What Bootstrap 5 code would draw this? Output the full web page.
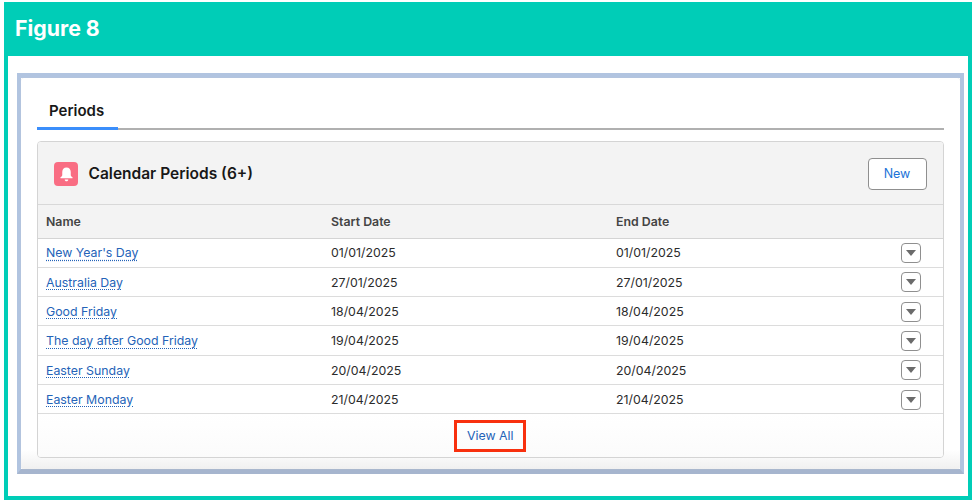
<!DOCTYPE html>
<html lang="en">
<head>
<meta charset="utf-8">
<title>Figure 8</title>
<link href="https://cdn.jsdelivr.net/npm/bootstrap@5.3.0/dist/css/bootstrap.min.css" rel="stylesheet">
<style>
html,body{background:#fff;margin:0;height:504px;overflow:hidden}
body{font-family:Inter,"Liberation Sans",sans-serif;color:#181818;padding:2px 4px 0}
.fig-frame{width:968px;height:498px;border:4px solid #00cdb7;border-top:0;display:flex;flex-direction:column}
.fig-head{height:54px;background:#00cdb7;margin:0 -4px;padding-left:11px;color:#fff;font:700 21.300px/52px Inter,sans-serif;flex:none}
.fig-body{flex:1;padding:17px 4px 0 9px}
.shot{height:401px;border:solid #b1c4e0;border-width:5px 4px 5px 4.500px;border-bottom-color:#a6b5ce;background:#fff}
.shot-in{height:100%;background:linear-gradient(#fff 95%,#f0f0f0);border-radius:4px;padding:0 16.500px 0 16px;box-shadow:0 0 1px #ccc}
.tab-bar{height:52px;border-bottom:2px solid #b0b0b0;display:flex;align-items:flex-end;margin-bottom:11px}
.tab-it{width:81px;height:34px;margin-bottom:-2px;border-bottom:3px solid #3b8efb;padding-left:12px;padding-top:4px;font-weight:600;font-size:15px;line-height:22px;color:#181818}
.panel{height:317px;border:1px solid #d4d4d4;border-radius:4px;overflow:hidden;background:#fff}
.panel-top{height:63px;background:#f3f3f3;border-bottom:1px solid #d8d8d8;padding:2px 15px 0 16px}
.bell{width:24px;height:24px;border-radius:4px;background:#f96d83;margin-right:10.500px}
.panel-title{font-size:15.500px;font-weight:600;color:#181818;margin:0}
.new-btn{width:59px;height:32px;padding:0;font-size:12.500px;color:#1b73d8;background:#fff;border:1px solid #8f8f8f;border-radius:4px;margin-right:1px}
.per-tb{margin:0;font-size:12.350px;table-layout:fixed;width:100%;color:#2b2b2b}
.per-tb th{height:33px;background:#f3f3f3;font-weight:600;color:#444;padding:2px 8px 0;border-bottom:1px solid #d4d4d4;vertical-align:middle;--bs-table-bg:#f3f3f3}
.per-tb td{height:29.330px;padding:2px 8px 0;border-bottom:1px solid #dcdcdc;vertical-align:middle}
.per-tb a{color:#2463b8;text-decoration:underline dotted #2463b8;text-underline-offset:2px}
.col-n{width:285px}.col-s{width:285px}.col-a{width:50px}
.per-tb .cell-a{padding:1px 22px 0 0;text-align:right}
.mini{display:inline-flex;width:20px;height:20px;border:1px solid #8f8f8f;border-radius:4px;background:#fff;padding:0;align-items:center;justify-content:center;vertical-align:middle}
.panel-foot{height:43px;display:flex;align-items:center;justify-content:center;background:linear-gradient(#fff,#fbfbfb)}
.view-all{display:block;width:72px;height:32px;border:3px solid #f8300e;text-align:center;line-height:26px;font-size:12.350px;color:#2463b8;text-decoration:none}
</style>
</head>
<body>
<div class="fig-frame">
  <div class="fig-head">Figure 8</div>
  <div class="fig-body">
    <div class="shot">
      <div class="shot-in">
        <div class="tab-bar"><div class="tab-it">Periods</div></div>
        <div class="panel">
          <div class="panel-top d-flex align-items-center">
            <span class="bell d-flex align-items-center justify-content-center">
              <svg width="17" height="17" viewBox="0 0 16 16" fill="#fff"><path d="M8 1.500c-2.500 0-4 1.900-4 4.200v2.700c0 .9-.7 1.500-1.500 2.100-.5.4-.3 1.100.4 1.100h10.200c.7 0 .9-.7.4-1.100-.8-.6-1.500-1.200-1.500-2.100V5.700c0-2.300-1.500-4.200-4-4.200z"/><path d="M6.300 12.700h3.400c0 1-.8 1.700-1.700 1.700s-1.700-.7-1.700-1.700z"/></svg>
            </span>
            <h2 class="panel-title flex-grow-1">Calendar Periods (6+)</h2>
            <button type="button" class="btn new-btn">New</button>
          </div>
          <table class="table per-tb">
            <colgroup><col class="col-n"><col class="col-s"><col><col class="col-a"></colgroup>
            <thead><tr><th>Name</th><th>Start Date</th><th>End Date</th><th></th></tr></thead>
            <tbody>
              <tr><td><a href="#">New Year's Day</a></td><td>01/01/2025</td><td>01/01/2025</td><td class="cell-a"><button type="button" class="mini" aria-label="Actions"><svg width="10" height="6" viewBox="0 0 10 6"><path d="M0 0h10L5 6z" fill="#6b6b6b"/></svg></button></td></tr>
              <tr><td><a href="#">Australia Day</a></td><td>27/01/2025</td><td>27/01/2025</td><td class="cell-a"><button type="button" class="mini" aria-label="Actions"><svg width="10" height="6" viewBox="0 0 10 6"><path d="M0 0h10L5 6z" fill="#6b6b6b"/></svg></button></td></tr>
              <tr><td><a href="#">Good Friday</a></td><td>18/04/2025</td><td>18/04/2025</td><td class="cell-a"><button type="button" class="mini" aria-label="Actions"><svg width="10" height="6" viewBox="0 0 10 6"><path d="M0 0h10L5 6z" fill="#6b6b6b"/></svg></button></td></tr>
              <tr><td><a href="#">The day after Good Friday</a></td><td>19/04/2025</td><td>19/04/2025</td><td class="cell-a"><button type="button" class="mini" aria-label="Actions"><svg width="10" height="6" viewBox="0 0 10 6"><path d="M0 0h10L5 6z" fill="#6b6b6b"/></svg></button></td></tr>
              <tr><td><a href="#">Easter Sunday</a></td><td>20/04/2025</td><td>20/04/2025</td><td class="cell-a"><button type="button" class="mini" aria-label="Actions"><svg width="10" height="6" viewBox="0 0 10 6"><path d="M0 0h10L5 6z" fill="#6b6b6b"/></svg></button></td></tr>
              <tr><td><a href="#">Easter Monday</a></td><td>21/04/2025</td><td>21/04/2025</td><td class="cell-a"><button type="button" class="mini" aria-label="Actions"><svg width="10" height="6" viewBox="0 0 10 6"><path d="M0 0h10L5 6z" fill="#6b6b6b"/></svg></button></td></tr>
            </tbody>
          </table>
          <div class="panel-foot"><a class="view-all" href="#">View All</a></div>
        </div>
      </div>
    </div>
  </div>
</div>
<script src="https://cdn.jsdelivr.net/npm/bootstrap@5.3.0/dist/js/bootstrap.bundle.min.js"></script>
</body>
</html>
